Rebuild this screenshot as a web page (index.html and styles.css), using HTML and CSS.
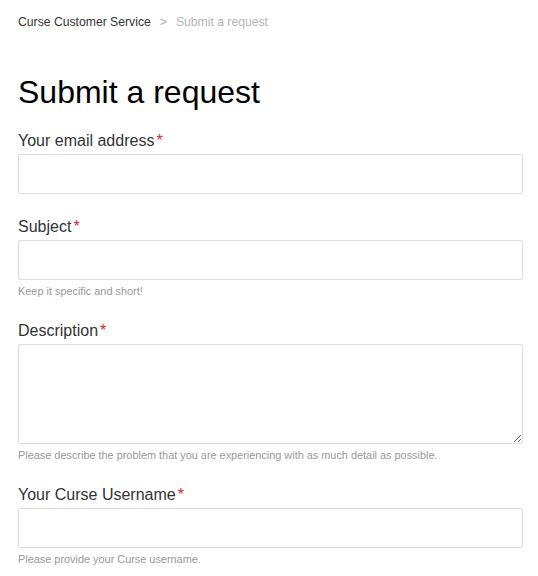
FILE: index.html
```html
<!DOCTYPE html>
<html>
<head>
<meta charset="utf-8">
<link rel="stylesheet" href="styles.css">
</head>
<body>
<div class="page">
  <nav class="breadcrumbs">
    <a class="crumb" href="#">Curse Customer Service</a>
    <span class="sep">&gt;</span>
    <span class="crumb current">Submit a request</span>
  </nav>
  <h1 class="title">Submit a request</h1>
  <form class="form">
    <div class="field">
      <label class="label">Your email address<span class="req">*</span></label>
      <input class="input" type="text">
    </div>
    <div class="field">
      <label class="label">Subject<span class="req">*</span></label>
      <input class="input" type="text">
      <p class="hint">Keep it specific and short!</p>
    </div>
    <div class="field">
      <label class="label">Description<span class="req">*</span></label>
      <textarea class="textarea"></textarea>
      <p class="hint">Please describe the problem that you are experiencing with as much detail as possible.</p>
    </div>
    <div class="field">
      <label class="label">Your Curse Username<span class="req">*</span></label>
      <input class="input" type="text">
      <p class="hint">Please provide your Curse username.</p>
    </div>
  </form>
</div>
</body>
</html>
```
FILE: styles.css
```css
* { box-sizing: border-box; }
body {
  margin: 0;
  background: #fff;
  font-family: "Liberation Sans", Arial, sans-serif;
  color: #333;
}
.page {
  padding: 13px 15px 0 18px;
}
.breadcrumbs {
  display: flex;
  gap: 8px;
  font-size: 12.2px;
  line-height: 18px;
  height: 18px;
}
.crumb { color: #333; text-decoration: none; }
.sep { color: #aaa; margin: 0 1px; }
.current { color: #b5b5b5; }
.title {
  margin: 41px 0 18px;
  font-size: 32px;
  line-height: 40px;
  font-weight: normal;
  color: #000;
}
.form { display: flex; flex-direction: column; }
.field {
  display: flex;
  flex-direction: column;
  margin-bottom: 22px;
}
.label {
  font-size: 16px;
  line-height: 20px;
  padding-top: 1px;
  color: #333;
  margin-bottom: 3px;
}
.req { color: #e22; margin-left: 2px; }
.input, .textarea {
  width: 100%;
  height: 40px;
  border: 1px solid #ddd;
  border-radius: 2px;
  font: inherit;
  background: #fff;
}
.textarea { height: 100px; resize: vertical; }
.hint {
  margin: 4px 0 0;
  font-size: 10.9px;
  line-height: 14px;
  color: #999;
}
```
